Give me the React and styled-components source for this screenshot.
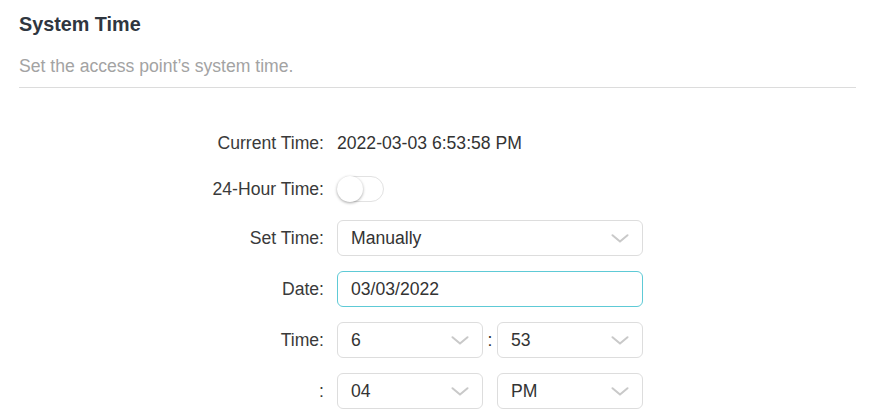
import { useState } from "react";
import styled, { createGlobalStyle } from "styled-components";

const GlobalStyle = createGlobalStyle`
  html, body {
    margin: 0;
    padding: 0;
    background: #ffffff;
  }
  body {
    font-family: "Liberation Sans", Arial, sans-serif;
    color: #333333;
  }
`;

const Chevron = () => (
  <svg width="18" height="9" viewBox="0 0 18 9" fill="none">
    <path d="M1.5 1.2 L9 7.6 L16.5 1.2" stroke="#c9c9c9" strokeWidth="2" strokeLinecap="round" strokeLinejoin="round" />
  </svg>
);

const SystemTime = () => {
  const [hour24, setHour24] = useState(false);

  return (
    <Page>
      <Header>
        <Title>System Time</Title>
        <Subtitle>Set the access point’s system time.</Subtitle>
      </Header>
      <Form>
        <Row $h={30}>
          <Label>Current Time:</Label>
          <Value>2022-03-03 6:53:58 PM</Value>
        </Row>
        <Row $h={32}>
          <Label>24-Hour Time:</Label>
          <Toggle $on={hour24} onClick={() => setHour24(!hour24)}>
            <Knob $on={hour24} />
          </Toggle>
        </Row>
        <Row>
          <Label>Set Time:</Label>
          <Select>
            <span>Manually</span>
            <Chevron />
          </Select>
        </Row>
        <Row>
          <Label>Date:</Label>
          <Input defaultValue="03/03/2022" />
        </Row>
        <Row>
          <Label>Time:</Label>
          <Pair>
            <Select $w={146}>
              <span>6</span>
              <Chevron />
            </Select>
            <Sep>:</Sep>
            <Select $w={146}>
              <span>53</span>
              <Chevron />
            </Select>
          </Pair>
        </Row>
        <Row>
          <Label>:</Label>
          <Pair>
            <Select $w={146}>
              <span>04</span>
              <Chevron />
            </Select>
            <Sep />
            <Select $w={146}>
              <span>PM</span>
              <Chevron />
            </Select>
          </Pair>
        </Row>
      </Form>
    </Page>
  );
};

export default function App() {
  return (
    <>
      <GlobalStyle />
      <SystemTime />
    </>
  );
}

// Estilos
const Page = styled.div`
  padding: 12px 19px 0;
  width: 875px;
  box-sizing: border-box;
`;

const Header = styled.div`
  border-bottom: 1px solid #dcdcdc;
  padding-bottom: 9px;
`;

const Title = styled.h2`
  margin: 0;
  font-size: 19.8px;
  line-height: 24px;
  font-weight: bold;
  color: #2f3640;
`;

const Subtitle = styled.p`
  margin: 18px 0 0;
  font-size: 17.6px;
  line-height: 24px;
  color: #a3a3a3;
`;

const Form = styled.div`
  display: flex;
  flex-direction: column;
  gap: 15px;
  padding-top: 40px;
`;

const Row = styled.div`
  display: flex;
  align-items: center;
  gap: 13px;
  height: ${(p) => p.$h || 36}px;
  font-size: 17.6px;
  line-height: 24px;
`;

const Label = styled.div`
  width: 305px;
  text-align: right;
  color: #3a3a3a;
`;

const Value = styled.div`
  color: #333333;
`;

const Toggle = styled.div`
  position: relative;
  width: 47px;
  height: 26px;
  border-radius: 13px;
  border: 1px solid #e2e2e2;
  background: ${(p) => (p.$on ? "#4acbd6" : "#ffffff")};
  box-sizing: border-box;
  cursor: pointer;
`;

const Knob = styled.div`
  position: absolute;
  top: -1px;
  left: ${(p) => (p.$on ? "20px" : "-1px")};
  width: 26px;
  height: 26px;
  border-radius: 50%;
  background: #ffffff;
  box-shadow: 0 1px 3px rgba(0, 0, 0, 0.35);
`;

const Select = styled.div`
  display: flex;
  align-items: center;
  justify-content: space-between;
  box-sizing: border-box;
  width: ${(p) => p.$w || 306}px;
  flex: none;
  height: 36px;
  padding: 0 13px;
  border: 1px solid #dddddd;
  border-radius: 6px;
  color: #333333;
  background: #ffffff;
`;

const Input = styled.input`
  box-sizing: border-box;
  width: 306px;
  height: 36px;
  padding: 0 13px;
  border: 1px solid #5ecad6;
  border-radius: 6px;
  font-family: inherit;
  font-size: 17.6px;
  color: #333333;
  outline: none;
`;

const Pair = styled.div`
  display: flex;
  align-items: center;
  width: 306px;
`;

const Sep = styled.span`
  width: 14px;
  text-align: center;
  color: #333333;
`;
